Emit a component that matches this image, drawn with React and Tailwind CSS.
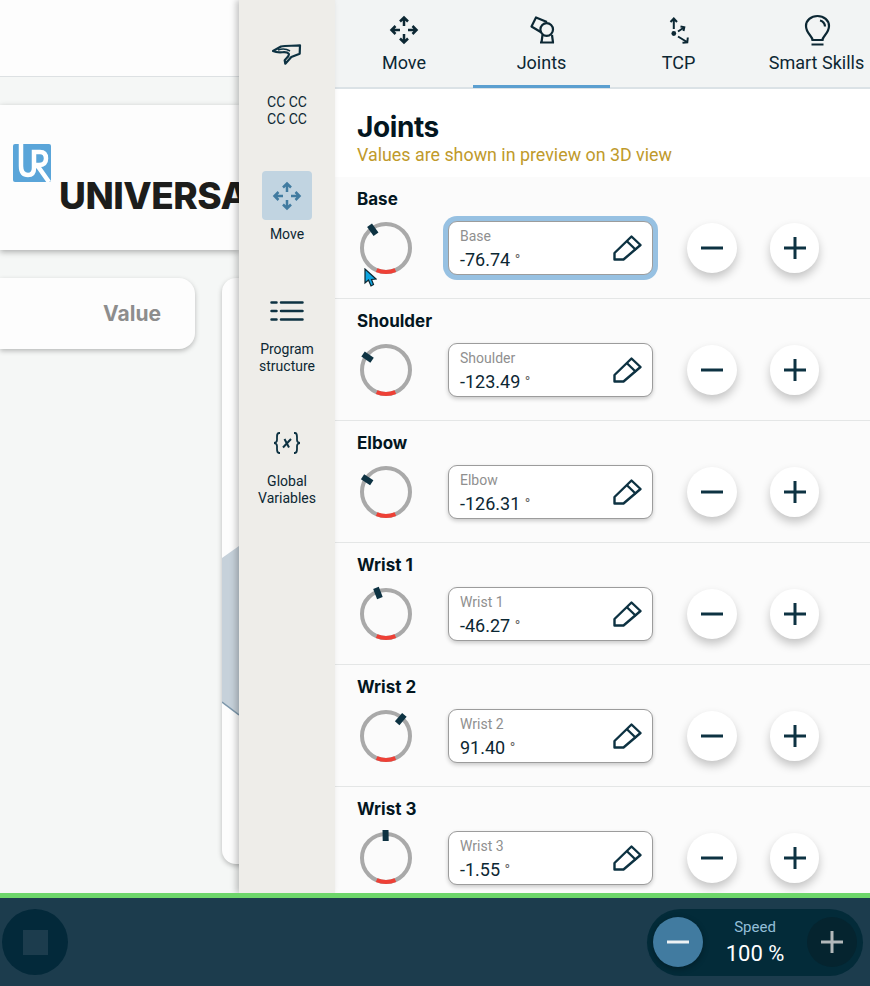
import React from "react";

const joints = [
  { name: "Base", value: "-76.74", angle: -36, focused: true },
  { name: "Shoulder", value: "-123.49", angle: -55 },
  { name: "Elbow", value: "-126.31", angle: -57 },
  { name: "Wrist 1", value: "-46.27", angle: -21 },
  { name: "Wrist 2", value: "91.40", angle: 41 },
  { name: "Wrist 3", value: "-1.55", angle: -1 },
];

const tabs = [
  { label: "Move", icon: <MoveIcon color="#0c2733" /> },
  { label: "Joints", icon: <JointsIcon />, active: true },
  { label: "TCP", icon: <TcpIcon /> },
  { label: "Smart Skills", icon: <BulbIcon /> },
];

export default function App() {
  return (
    <div className="flex h-screen w-full flex-col overflow-hidden bg-[#f5f7f6] font-['Roboto',sans-serif] text-[#0c2733]">
      <div className="flex min-h-0 flex-1">
        <LeftContent />
        <Rail />
        <main className="flex w-[535px] flex-col overflow-hidden bg-white">
          <nav className="flex h-[89px] shrink-0 border-b-2 border-[#dbe2e6] bg-[#f2f4f4]">
            {tabs.map((t) => (
              <div
                key={t.label}
                className={
                  "flex h-[88px] w-[137px] shrink-0 flex-col items-center border-b-[3px] pt-[14px] first:w-[138px] last:w-[139px] " +
                  (t.active ? "border-[#5b9fd0]" : "border-transparent")
                }
              >
                <div className="h-[33px] w-[32px]">{t.icon}</div>
                <span className="mt-[4px] whitespace-nowrap text-[18px] leading-[24px]">{t.label}</span>
              </div>
            ))}
          </nav>

          <header className="h-[88px] shrink-0 pl-[22px] pt-[20px]">
            <h1 className="font-['Inter',sans-serif] text-[28px] font-bold leading-[36px] tracking-[-0.4px] text-[#03161f]">
              Joints
            </h1>
            <p className="mt-[1px] text-[17.85px] leading-[18px] text-[#c09a2b]">
              Values are shown in preview on 3D view
            </p>
          </header>

          {joints.map((j) => (
            <JointRow key={j.name} joint={j} />
          ))}
        </main>
      </div>
      <Footer />
    </div>
  );
}

function LeftContent() {
  return (
    <section className="flex w-[239px] shrink-0 flex-col overflow-hidden">
      <div className="h-[77px] shrink-0 border-b border-[#dde1e3] bg-[#fdfdfd]" />
      <div className="mt-[28px] h-[145px] shrink-0 overflow-hidden bg-[#fdfdfd] shadow-[0_2px_6px_rgba(0,0,0,0.3)]">
        <UrLogo />
        <div className="ml-[59px] mt-[-8px] whitespace-nowrap font-['Inter',sans-serif] text-[37px] font-extrabold leading-[44px] tracking-[-0.5px] text-[#1d1d1b]">
          UNIVERSAL
        </div>
      </div>
      <div className="mt-[28px] flex shrink-0 items-start gap-[27px]">
        <div className="flex h-[71px] w-[195px] shrink-0 items-center justify-end rounded-r-[16px] bg-[#fdfdfd] pr-[34px] shadow-[0_2px_5px_rgba(0,0,0,0.25)]">
          <span className="font-['Inter',sans-serif] text-[21px] font-bold text-[#8d8d8d]">Value</span>
        </div>
        <div className="h-[586px] w-[40px] shrink-0 overflow-hidden rounded-l-[14px] bg-[#fdfdfd] pt-[268px] shadow-[0_2px_5px_rgba(0,0,0,0.25)]">
          <svg width="17" height="170" viewBox="0 0 17 170" className="block">
            <polygon points="0,12 17,0 17,169 0,156" fill="#c6d1da" />
            <line x1="0" y1="156" x2="17" y2="169" stroke="#7d97ab" strokeWidth="1.5" />
          </svg>
        </div>
      </div>
    </section>
  );
}

function UrLogo() {
  return (
    <svg width="38" height="38" viewBox="0 0 38 38" className="ml-[13px] mt-[39px] block">
      <rect width="38" height="38" rx="2" fill="#5aa5d9" />
      <path
        d="M8 0V22Q8 31 15 31Q21 31 21 24V8H27Q33 8 33 14.500Q33 21 26 21H24L36 38"
        fill="none"
        stroke="#fff"
        strokeWidth="4.500"
      />
    </svg>
  );
}

function Rail() {
  return (
    <aside className="relative z-10 flex w-[96px] shrink-0 flex-col items-center bg-[#eeede9] pt-[30px] text-center text-[14px] leading-[16.5px] text-[#0c2733] shadow-[-3px_0_6px_rgba(0,0,0,0.22)]">
      <div className="flex h-[50px] w-[50px] items-center justify-center">
        <HandIcon />
      </div>
      <div className="mt-[14px]">
        CC CC
        <br />
        CC CC
      </div>

      <div className="mt-[44px] flex h-[49px] w-[50px] items-center justify-center rounded-[4px] bg-[#c1d4e1]">
        <div className="h-[32px] w-[32px]">
          <MoveIcon color="#417ba0" />
        </div>
      </div>
      <div className="mt-[6px]">Move</div>

      <div className="mt-[43px] flex h-[50px] w-[50px] items-center justify-center">
        <ListIcon />
      </div>
      <div className="mt-[5px] leading-[17px]">
        Program
        <br />
        structure
      </div>

      <div className="mt-[43px] flex h-[50px] w-[50px] items-center justify-center">
        <VarsIcon />
      </div>
      <div className="mt-[5px] leading-[17px]">
        Global
        <br />
        Variables
      </div>
    </aside>
  );
}

function JointRow({ joint }) {
  return (
    <div className="h-[122px] shrink-0 border-b border-[#e4e6e6] bg-[#fbfbfb] pt-[12px]">
      <div className="pl-[22px] font-['Inter',sans-serif] text-[17px] font-bold leading-[20px] text-[#03161f]">
        {joint.name}
      </div>
      <div className="relative mt-[12px] flex h-[54px] items-center pl-[23px]">
        <Dial angle={joint.angle} />
        {/* mouse pointer caught in the screenshot */}
        {joint.focused && (
          <svg width="13" height="19" viewBox="0 0 13 19" className="absolute left-[29px] top-[47px]">
            <path d="M1 1V15L4.500 12L7 18L9.500 16.500L7.500 11.500L12 11Z" fill="#0ea5e0" stroke="#0b2530" strokeWidth="1.200" />
          </svg>
        )}
        <div
          className={
            "ml-[34px] flex h-[54px] w-[205px] shrink-0 items-center justify-between rounded-[9px] border border-[#9c9c9c] bg-white pl-[11px] pr-[9px] " +
            (joint.focused
              ? "shadow-[0_0_0_5px_#97c1e2]"
              : "shadow-[0_2px_4px_rgba(0,0,0,0.2)]")
          }
        >
          <div className="pt-[4px]">
            <div className="text-[14px] leading-[18px] text-[#8f8f8f]">{joint.name}</div>
            <div className="mt-[3px] text-[18px] leading-[24px] text-[#0c2733]">
              {joint.value} <span className="relative top-[-1px] text-[15px] text-[#666]">°</span>
            </div>
          </div>
          <PencilIcon />
        </div>
        <RoundButton className="ml-[34px] w-[50px]" kind="minus" />
        <RoundButton className="ml-[33px] w-[49px]" kind="plus" />
      </div>
    </div>
  );
}

function RoundButton({ kind, className }) {
  return (
    <button
      type="button"
      className={
        "flex h-[50px] shrink-0 items-center justify-center rounded-full bg-white shadow-[0_5px_10px_rgba(0,0,0,0.22)] " +
        className
      }
    >
      <svg width="24" height="24" viewBox="0 0 24 24" fill="none" stroke="#0d3242" strokeWidth="3">
        <path d="M1 12H23" />
        {kind === "plus" && <path d="M12 1V23" />}
      </svg>
    </button>
  );
}

function Dial({ angle }) {
  const r = 24;
  const c = 28;
  const a = (23 * Math.PI) / 180;
  const dx = r * Math.sin(a);
  const dy = r * Math.cos(a);
  return (
    <svg width="56" height="56" viewBox="0 0 56 56" className="shrink-0">
      <circle cx={c} cy={c} r={r} fill="none" stroke="#a9a9a9" strokeWidth="4" />
      <path
        d={`M${c - dx} ${c + dy}A${r} ${r} 0 0 0 ${c + dx} ${c + dy}`}
        fill="none"
        stroke="#ee4036"
        strokeWidth="4"
      />
      <rect x="25" y="0" width="6" height="11" fill="#0d3242" transform={`rotate(${angle} ${c} ${c})`} />
    </svg>
  );
}

function Footer() {
  return (
    <footer className="relative z-20 flex h-[93px] shrink-0 items-center justify-between border-t-[5px] border-[#6dd66a] bg-[#1c3c4d] pl-[2px] pr-[7px]">
      <div className="flex h-[66px] w-[66px] items-center justify-center rounded-full bg-[#03293a]">
        <div className="h-[25px] w-[25px] bg-[#1c3c4d]" />
      </div>
      <div className="flex h-[67px] w-[216px] items-center justify-between rounded-full bg-[#032b39] px-[6px]">
        <div className="flex h-[50px] w-[50px] items-center justify-center rounded-full bg-[#417ba0] shadow-[0_2px_6px_rgba(0,0,0,0.3)]">
          <svg width="24" height="24" viewBox="0 0 24 24" fill="none" stroke="#eef2f4" strokeWidth="3">
            <path d="M1 12H23" />
          </svg>
        </div>
        <div className="text-center">
          <div className="text-[15px] leading-[20px] text-[#93bfd8]">Speed</div>
          <div className="mt-[4px] text-[22px] leading-[26px] text-white">100 %</div>
        </div>
        <div className="flex h-[50px] w-[50px] items-center justify-center rounded-full bg-[#05242f]">
          <svg width="24" height="24" viewBox="0 0 24 24" fill="none" stroke="#b3b8ba" strokeWidth="3">
            <path d="M1 12H23M12 1V23" />
          </svg>
        </div>
      </div>
    </footer>
  );
}

/* drawn icons */

function MoveIcon({ color }) {
  return (
    <svg viewBox="0 0 32 32" width="32" height="32" fill="none" stroke={color} strokeWidth="2.500">
      <path d="M16 4V12M12 7.500L16 3.500L20 7.500M16 20V28M12 24.500L16 28.500L20 24.500M3.500 16H12M7.500 12L3.500 16L7.500 20M20 16H28.500M24.500 12L28.500 16L24.500 20" />
    </svg>
  );
}

function JointsIcon() {
  return (
    <svg viewBox="0 0 32 33" width="32" height="33" fill="none" stroke="#0c2733" strokeWidth="2.200" strokeLinejoin="round">
      <path d="M15.500 18.500L5.500 12.500L10 3.500L21 8" />
      <circle cx="20.700" cy="15.500" r="6.300" />
      <path d="M16.500 21L15.500 28.500H27L26 21M14 28.500H28" />
    </svg>
  );
}

function TcpIcon() {
  return (
    <svg viewBox="0 0 32 33" width="32" height="33" fill="none" stroke="#0c2733" strokeWidth="2">
      <path d="M10.800 15V4.500M7.500 8L10.800 4.500L14 8M15 17.500L21 13.500M17.500 12.500L21.300 13.200L20.500 17M15 22.500L24 28M19.500 28.800L24.300 28.300L24.800 23.500" />
      <circle cx="10.800" cy="19.500" r="2.400" fill="#0c2733" stroke="none" />
    </svg>
  );
}

function BulbIcon() {
  return (
    <svg viewBox="0 0 32 33" width="32" height="33" fill="none" stroke="#0c2733" strokeWidth="2.200">
      <path d="M11.500 26C11.500 22 5 19.500 5 12C5 6.500 10 2 16.500 2C23 2 28 6.500 28 12C28 19.500 21.500 22 21.500 26Z" />
      <path d="M19 6.500C21.500 7 24 9.500 24 12.500M10.500 30.500H22.500" />
    </svg>
  );
}

function HandIcon() {
  return (
    <svg viewBox="0 0 30 22" width="30" height="22" fill="none" stroke="#0d3242" strokeWidth="2.200" strokeLinejoin="round">
      <path d="M1 7L9 2.500C14 1.500 22 2 28 1.300L27.700 9.700L19.300 13L13.300 19.700L12.700 16.300C14 14 18 12 16.700 9.700C14 6 8 10.500 1 7Z" />
      <path d="M6 6C10 4.500 14 4.500 18 7" strokeWidth="1.500" />
    </svg>
  );
}

function ListIcon() {
  return (
    <svg viewBox="0 0 34 22" width="34" height="22" fill="none" stroke="#0d3242" strokeWidth="2.500" strokeLinecap="round">
      <path d="M1.500 2.500H6.500M11 2.500H32.500M1.500 11H6.500M11 11H32.500M1.500 19.500H6.500M11 19.500H32.500" />
    </svg>
  );
}

function VarsIcon() {
  return (
    <svg viewBox="0 0 30 24" width="30" height="24" fill="none" stroke="#0d3242" strokeWidth="1.800">
      <path d="M8 2H7C5 2 5 4 5 6V9C5 11 3 12 2 12C3 12 5 13 5 15V18C5 20 5 22 7 22H8" />
      <path d="M22 2H23C25 2 25 4 25 6V9C25 11 27 12 28 12C27 12 25 13 25 15V18C25 20 25 22 23 22H22" />
      <path d="M12.500 8L17 16.500M19 8L11 16.500" strokeWidth="2" />
    </svg>
  );
}

function PencilIcon() {
  return (
    <svg viewBox="0 0 30 26" width="30" height="26" fill="none" stroke="#0d3242" strokeWidth="2.400" strokeLinejoin="round" className="shrink-0">
      <path d="M1.500 24.500V18L18.500 1.500L27.500 10L10.500 24.500Z" />
      <path d="M13.700 6L23 15" />
    </svg>
  );
}
